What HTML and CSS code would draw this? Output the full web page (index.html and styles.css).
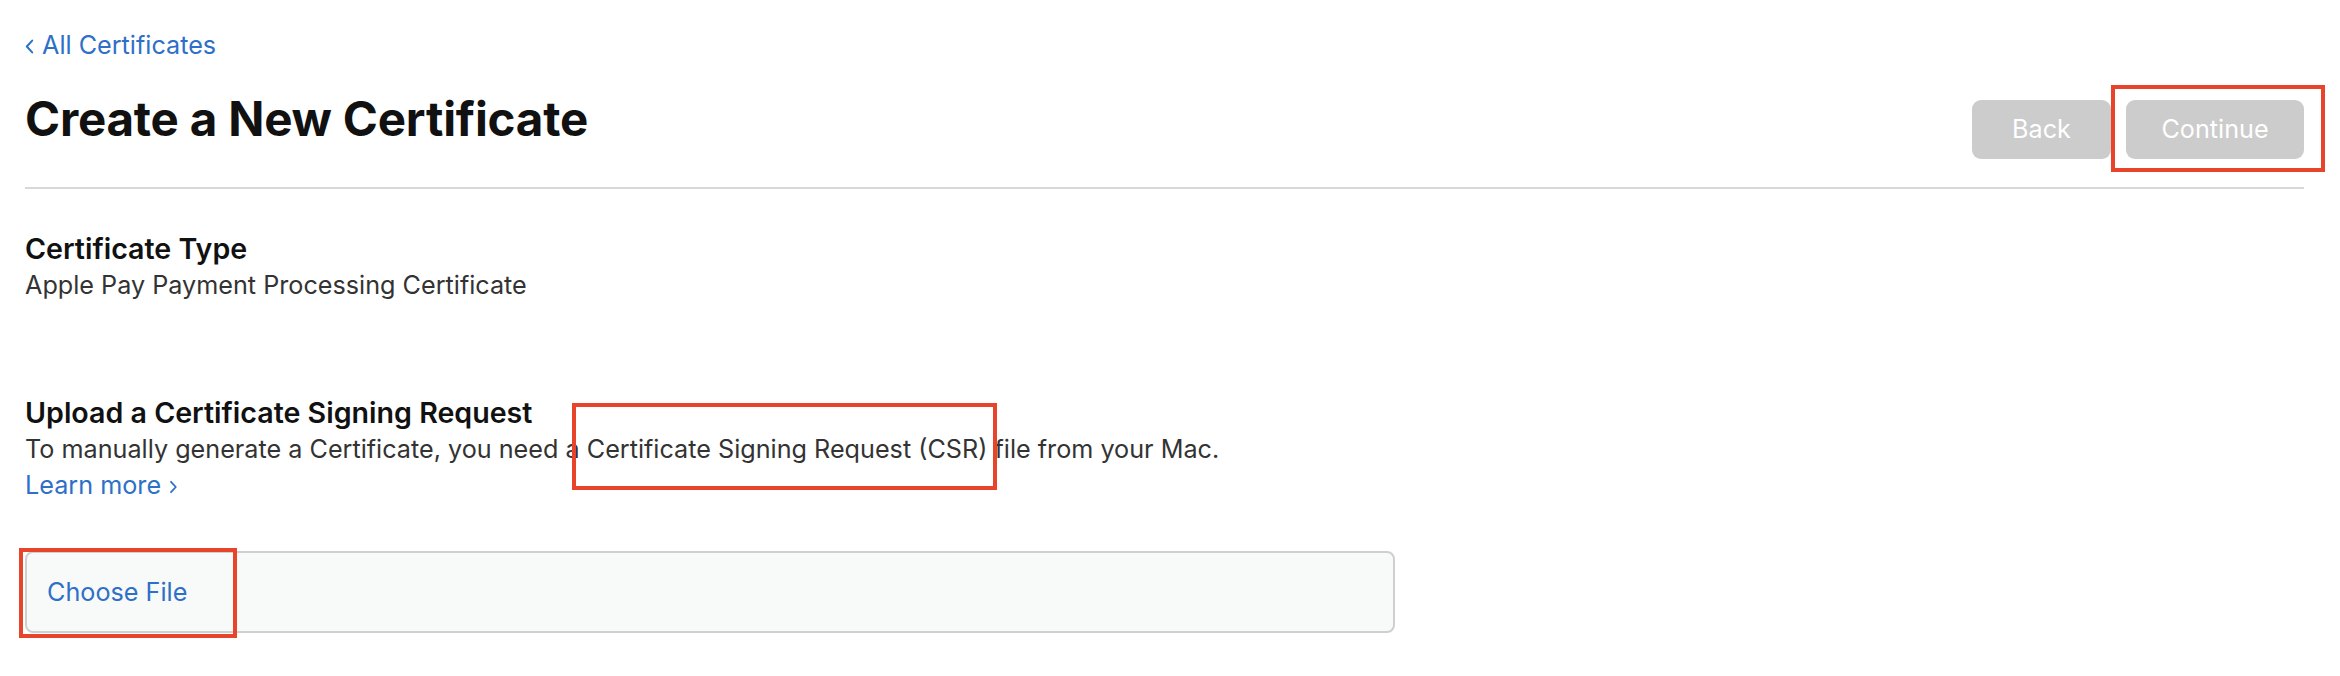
FILE: index.html
```html
<!DOCTYPE html>
<html lang="en">
<head>
<meta charset="utf-8">
<title>Create a New Certificate</title>
<link rel="stylesheet" href="styles.css">
</head>
<body>
<main class="page">
  <a class="back-link" href="#">
    <svg class="chev-left" width="9" height="15" viewBox="0 0 9 15" aria-hidden="true"><path d="M7.2 1.6 L1.8 7.5 L7.2 13.4" fill="none" stroke="currentColor" stroke-width="2" stroke-linecap="round" stroke-linejoin="round"/></svg>
    <span>All Certificates</span>
  </a>

  <header class="page-header">
    <h1 class="title">Create a New Certificate</h1>
    <div class="actions">
      <button class="btn" type="button">Back</button>
      <button class="btn btn-continue" type="button">Continue</button>
    </div>
  </header>

  <section class="section section-type">
    <h2 class="section-title">Certificate Type</h2>
    <p class="section-text">Apple Pay Payment Processing Certificate</p>
  </section>

  <section class="section section-upload">
    <h2 class="section-title">Upload a Certificate Signing Request</h2>
    <p class="section-text">To manually generate a Certificate, you need a <span class="csr">Certificate Signing Request (CSR)</span> file from your Mac.</p>
    <a class="learn-more" href="#"><span>Learn more</span><svg class="chev-right" width="9" height="14" viewBox="0 0 9 14" aria-hidden="true"><path d="M2 1.8 L6.8 7 L2 12.2" fill="none" stroke="currentColor" stroke-width="1.8" stroke-linecap="round" stroke-linejoin="round"/></svg></a>
  </section>

  <div class="file-input">
    <span class="file-btn">Choose File</span>
  </div>
</main>
</body>
</html>
```

FILE: styles.css
```css
html, body {
  margin: 0;
  padding: 0;
  background: #ffffff;
}

body {
  font-family: "Inter", "Liberation Sans", sans-serif;
  color: #333333;
  -webkit-font-smoothing: antialiased;
}

.page {
  padding: 27px 36px 43px 25px;
}

.back-link {
  display: inline-flex;
  align-items: center;
  gap: 8px;
  height: 36px;
  font-size: 25.2px;
  line-height: 36px;
  color: #2e70c8;
  text-decoration: none;
}

.chev-left {
  margin-top: 3px;
}

.page-header {
  display: flex;
  justify-content: space-between;
  align-items: flex-start;
  margin-top: 28px;
  padding-bottom: 28px;
  border-bottom: 2px solid #d8d8d8;
}

.title {
  margin: 0;
  font-size: 47.5px;
  line-height: 56px;
  font-weight: 700;
  color: #111111;
  letter-spacing: -0.2px;
}

.actions {
  display: flex;
  gap: 15px;
  margin-top: 9px;
}

.btn {
  position: relative;
  height: 59px;
  min-width: 139px;
  padding: 0 34px;
  border: none;
  border-radius: 9px;
  background: #cccccc;
  color: #ffffff;
  font-family: inherit;
  font-size: 25.2px;
  line-height: 59px;
}

.btn-continue {
  min-width: 178px;
}

.btn-continue::after {
  content: "";
  position: absolute;
  top: -15px;
  left: -15px;
  right: -21px;
  bottom: -13px;
  border: 4px solid #e8442c;
}

.section-type {
  margin-top: 42px;
}

.section-upload {
  margin-top: 92px;
}

.section-title {
  margin: 0;
  font-size: 28.6px;
  line-height: 36px;
  font-weight: 600;
  color: #111111;
}

.section-text {
  margin: 0;
  font-size: 25.2px;
  line-height: 36px;
  color: #333333;
}

.csr {
  position: relative;
}

.csr::after {
  content: "";
  position: absolute;
  top: -31px;
  bottom: -26px;
  left: -15px;
  right: -10px;
  border: 4px solid #e8442c;
}

.learn-more {
  display: inline-flex;
  align-items: center;
  gap: 8px;
  font-size: 25.2px;
  line-height: 36px;
  color: #2e70c8;
  text-decoration: none;
}

.chev-right {
  margin-top: 4px;
}

.file-input {
  position: relative;
  display: flex;
  align-items: center;
  box-sizing: border-box;
  max-width: 1370px;
  height: 82px;
  margin-top: 48px;
  border: 2px solid #cfcfcf;
  border-radius: 8px;
  background: #f8f9f9;
}

.file-input::after {
  content: "";
  position: absolute;
  top: -5px;
  left: -8px;
  width: 218px;
  height: 90px;
  box-sizing: border-box;
  border: 4px solid #e8442c;
}

.file-btn {
  padding-left: 20px;
  font-size: 25.2px;
  line-height: 36px;
  color: #2e70c8;
}
```
